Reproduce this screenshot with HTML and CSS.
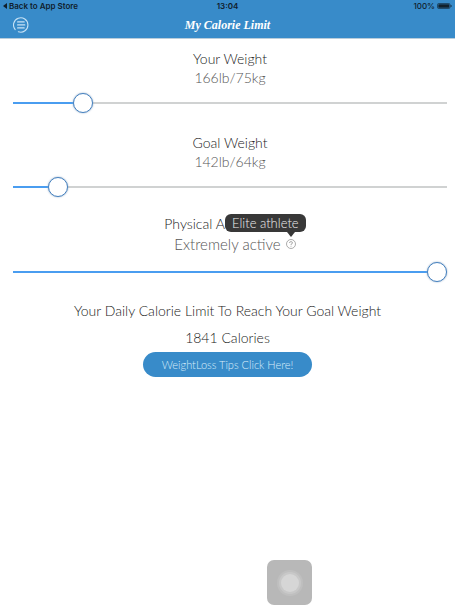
FILE: index.html
```html
<!DOCTYPE html>
<html lang="en">
<head>
    <meta charset="UTF-8">
    <meta name="viewport" content="width=device-width, initial-scale=1.0">
    <title>My Calorie Limit</title>
    <link rel="stylesheet" href="styles.css">
</head>
<body>
    <header>
        <div class="status">
            <a href="#" class="back">
                <svg width="4" height="6" viewBox="0 0 4 6"><path d="M4 0v6L0 3z"/></svg>Back to App Store
            </a>
            <span>13:04</span>
            <span class="battery">100%
                <svg width="15" height="6" viewBox="0 0 15 6"><rect x=".5" y=".5" width="12.5" height="5" rx="1.2" fill="none" stroke="#10202c" stroke-width=".6"/><rect x="1.3" y="1.2" width="11" height="3.6" rx=".6"/><path d="M13.7 2v2q1-.2 1-1t-1-1z"/></svg>
            </span>
        </div>
        <div class="navbar">
            <button class="menuBtn" aria-label="Menu">
                <svg width="16" height="16" viewBox="0 0 16 16" fill="none" stroke="#c7e2f5" stroke-width="1.1" stroke-linecap="round"><path d="M2.2 12.6A7.2 7.2 0 1 1 5.4 14.8M4.6 4.9h6.6M4.6 7.9h7.2M4.6 10.9h6.6"/></svg>
            </button>
            <h1>My Calorie Limit</h1>
        </div>
    </header>

    <main>
        <section class="group">
            <label for="weight">Your Weight</label>
            <output class="value" for="weight">166lb/75kg</output>
            <input type="range" id="weight" min="108" max="508" value="166" style="--fill: 14.5%">
        </section>

        <section class="group goal">
            <label for="goal">Goal Weight</label>
            <output class="value" for="goal">142lb/64kg</output>
            <input type="range" id="goal" min="108" max="508" value="142" style="--fill: 8.5%">
        </section>

        <section class="group activity">
            <label for="activity">Physical Activity Level</label>
            <div class="value">
                <output for="activity">Extremely active</output>
                <span class="help">
                    <button aria-label="About this level" aria-describedby="tip">
                        <svg width="10" height="10" viewBox="0 0 10 10" fill="none" stroke="#8a8a8a" stroke-width=".7"><circle cx="5" cy="5" r="4.5"/><path d="M3.5 4Q3.5 2.6 5 2.6T6.5 4Q6.5 4.7 5 5.3v.8M5 6.9v.8"/></svg>
                    </button>
                    <span class="tooltip" id="tip" role="tooltip">Elite athlete</span>
                </span>
            </div>
            <input type="range" id="activity" min="1" max="5" value="5" style="--fill: 100%">
        </section>

        <section class="result">
            <h2>Your Daily Calorie Limit To Reach Your Goal Weight</h2>
            <p>1841 Calories</p>
            <button class="tips">WeightLoss Tips Click Here!</button>
        </section>
    </main>

    <button class="assist" aria-label="Assistive touch"><span></span></button>
</body>
</html>
```

FILE: styles.css
```css
*{
    box-sizing: border-box;
}
body{
    margin: 0;
    background-color: #fff;
    color: #222;
    font-family: Lato, "Liberation Sans", sans-serif;
    font-size: 14px;
    font-weight: 300;
}
button{
    border: 0;
    padding: 0;
    background: none;
    font: inherit;
}
svg{
    display: block;
}
header{
    background-color: #388bc9;
    border-bottom: 1px solid #b9cddb;
}
.status{
    display: grid;
    grid-template-columns: 1fr auto 1fr;
    align-items: center;
    height: 12px;
    padding: 0 3px;
    color: #10202c;
    font-family: Inter, sans-serif;
    font-size: 8px;
    font-weight: 600;
}
.status svg{
    fill: #10202c;
}
.back{
    display: flex;
    align-items: center;
    gap: 2px;
    color: inherit;
    text-decoration: none;
}
.battery{
    display: flex;
    justify-content: flex-end;
    align-items: center;
    gap: 2px;
    font-weight: 500;
}
.navbar{
    display: grid;
    grid-template-columns: 16px 1fr 16px;
    align-items: center;
    height: 26px;
    padding: 0 13px;
}
h1{
    margin: 0;
    color: #fff;
    font-family: "Liberation Serif", serif;
    font-size: 12px;
    font-style: italic;
    font-weight: bold;
    line-height: 24px;
    text-align: center;
}
main{
    padding-top: 10px;
}
.group{
    display: flex;
    flex-direction: column;
    align-items: center;
    padding: 0 8px 20px 13px;
}
.group label{
    line-height: 20px;
}
.value{
    display: flex;
    align-items: center;
    gap: 5px;
    height: 16px;
    color: #555;
}
.group input{
    -webkit-appearance: none;
    appearance: none;
    width: 100%;
    height: 20px;
    margin: 8px 0 0;
    background: linear-gradient(#4a9df0, #4a9df0) left center / var(--fill) 2px no-repeat,
        linear-gradient(#d0d2d2, #d0d2d2) center / 100% 2px no-repeat;
}
.group input::-webkit-slider-thumb{
    -webkit-appearance: none;
    width: 20px;
    height: 20px;
    border: 1px solid #4581c0;
    border-radius: 50%;
    background-color: #fff;
    box-shadow: 0 0 2px #8aa5c0;
}
.group.goal{
    padding-bottom: 17px;
}
.group.activity{
    padding-bottom: 15px;
}
.activity .value{
    height: 20px;
    padding-left: 10px;
    font-size: 15px;
}
.help{
    display: flex;
    position: relative;
}
.tooltip{
    position: absolute;
    right: -10px;
    bottom: 17px;
    padding: 0 7px;
    border-radius: 6px;
    background-color: #383838;
    color: #eee;
    font-size: 13px;
    line-height: 18px;
    white-space: nowrap;
}
.tooltip::after{
    content: "";
    position: absolute;
    top: 100%;
    right: 11px;
    border: 4px solid transparent;
    border-top: 5px solid #383838;
    border-bottom: 0;
}
.result{
    text-align: center;
}
h2, .result p{
    margin: 0;
    font-size: 14px;
    font-weight: 300;
    line-height: 27px;
}
.tips{
    height: 25px;
    margin-top: 1px;
    padding: 0 19px;
    border-radius: 13px;
    background-color: #388bc9;
    color: #d9edfa;
    font-size: 11px;
}
.assist{
    position: fixed;
    right: 143px;
    bottom: 1px;
    display: grid;
    place-items: center;
    width: 45px;
    height: 45px;
    border-radius: 7px;
    background-color: #b8b8b8;
}
.assist span{
    width: 18px;
    height: 18px;
    border-radius: 50%;
    background-color: #d6d6d6;
    box-shadow: 0 0 0 2px #c8c8c8, 0 0 0 4px #bfbfbf;
}
```
